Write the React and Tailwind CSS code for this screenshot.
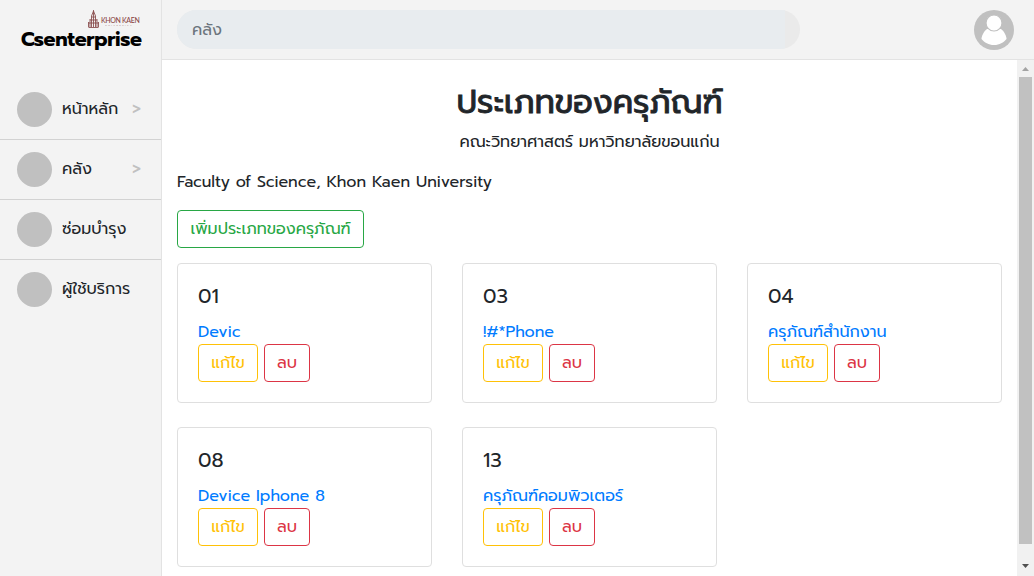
import React from "react";

const menu = [
  { label: "หน้าหลัก", arrow: true },
  { label: "คลัง", arrow: true },
  { label: "ซ่อมบำรุง" },
  { label: "ผู้ใช้บริการ" },
];

const cards = [
  { id: "01", name: "Devic" },
  { id: "03", name: "!#*Phone" },
  { id: "04", name: "ครุภัณฑ์สำนักงาน" },
  { id: "08", name: "Device Iphone 8" },
  { id: "13", name: "ครุภัณฑ์คอมพิวเตอร์" },
];

function Logo() {
  return (
    <div className="flex h-20 flex-col pt-[9px] pl-[21px]">
      <div className="flex h-5 items-start gap-[2px] pl-[67px]">
        <svg width="11" height="20" viewBox="0 0 11 20" fill="none" stroke="#8b5050" strokeWidth="0.9">
          <path d="M5.500 1v17M5.500 2 3.500 7v11M5.500 2l2 5v11M2 10v8M9 10v8M.5 13v5M10.500 13v5M.5 18.500h10M3.500 8h4M2 11h7M.5 14h10" />
        </svg>
        <div className="flex flex-col pt-[8px] text-[#8b4545]">
          <span className="h-[7px] font-['Lato'] text-[7px] leading-[7px] font-medium tracking-[-0.35px] whitespace-nowrap">KHON KAEN</span>
          <span className="h-[3px] pl-1 text-[2.500px] leading-[3px] tracking-[1.400px] opacity-60">UNIVERSITY</span>
        </div>
      </div>
      <span className="font-['Prompt'] text-[20px] leading-[20px] font-bold tracking-[-0.35px] text-black">Csenterprise</span>
    </div>
  );
}

function Sidebar() {
  return (
    <aside className="h-full w-[162px] shrink-0 border-r border-[#e3e3e3] bg-[#f3f3f3]">
      <Logo />
      <nav>
        {menu.map((item) => (
          <div key={item.label} className="flex h-[60px] items-center border-b border-[#d2d2d2] pr-5 pl-[17px] last:border-transparent">
            <span className="size-[35px] shrink-0 rounded-full bg-[#c0c0c0]" />
            <span className="mb-[2px] ml-[10px] whitespace-nowrap text-[#212529]">{item.label}</span>
            {item.arrow && <span className="mb-[2px] ml-auto font-medium text-[#c0c0c0]">&gt;</span>}
          </div>
        ))}
      </nav>
    </aside>
  );
}

function Header() {
  return (
    <header className="flex h-[60px] shrink-0 items-center justify-between border-b border-[#e3e3e3] bg-[#f3f3f3] pr-5 pl-[15px]">
      <div className="h-[39px] w-[623px] overflow-hidden rounded-full bg-[#eaeaea] pr-[15px]">
        <div className="flex h-full items-center bg-[#e8ecef] pl-[15px] text-[#6c757d]">คลัง</div>
      </div>
      <svg width="40" height="40" viewBox="0 0 40 40">
        <circle cx="20" cy="20" r="20" fill="#c0c0c0" />
        <path d="M13 19C9 22 7.500 27 7.500 29c3 3.500 7 6 12.500 6s9.500-2.500 12.500-6c0-2-1.500-7-5.500-10z" fill="#fff" />
        <circle cx="20" cy="13" r="8" fill="#fff" stroke="#c0c0c0" strokeWidth="1.200" />
      </svg>
    </header>
  );
}

function Card({ id, name }) {
  return (
    <article className="h-[140px] rounded border border-[#dfdfdf] p-5">
      <h5 className="mb-3 text-xl leading-6 font-normal text-[#212529]">{id}</h5>
      <div className="h-6 whitespace-nowrap text-[#007bff]">{name}</div>
      <div className="flex gap-[6px]">
        <button className="flex h-[38px] w-[60px] items-center justify-center rounded border border-[#ffc107] text-[#ffc107]">แก้ไข</button>
        <button className="flex h-[38px] w-[46px] items-center justify-center rounded border border-[#dc3545] text-[#dc3545]">ลบ</button>
      </div>
    </article>
  );
}

function Scrollbar() {
  return (
    <div className="flex w-[17px] shrink-0 flex-col items-center bg-[#f1f1f1]">
      <svg width="17" height="17" viewBox="0 0 17 17"><path d="M5 11h7L8.500 7z" fill="#a3a3a3" /></svg>
      <div className="h-[467px] w-[13px] bg-[#c1c1c1]" />
      <svg className="mt-auto" width="17" height="17" viewBox="0 0 17 17"><path d="M5 5h7L8.500 9z" fill="#505050" /></svg>
    </div>
  );
}

export default function App() {
  return (
    <div className="flex h-[576px] w-[1034px] overflow-hidden bg-white font-['Prompt','Noto_Sans_Thai','Noto_Sans',sans-serif] text-base leading-6 font-normal text-[#212529]">
      <Sidebar />
      <div className="flex min-w-0 flex-1 flex-col">
        <Header />
        <div className="flex min-h-0 flex-1">
          <main className="min-w-0 flex-1 overflow-hidden px-[15px] pt-6">
            <h1 className="mb-2 text-center text-[32px] leading-[38px] font-normal [-webkit-text-stroke:0.9px_#212529]">ประเภทของครุภัณฑ์</h1>
            <p className="mb-4 text-center">คณะวิทยาศาสตร์ มหาวิทยาลัยขอนแก่น</p>
            <p className="mb-4">Faculty of Science, Khon Kaen University</p>
            <button className="mb-[15px] flex h-[38px] w-[187px] items-center justify-center rounded border border-[#28a745] whitespace-nowrap text-[#28a745]">เพิ่มประเภทของครุภัณฑ์</button>
            <div className="grid grid-cols-[255px_255px_255px] gap-x-[30px] gap-y-6">
              {cards.map((c) => <Card key={c.id} {...c} />)}
            </div>
          </main>
          <Scrollbar />
        </div>
      </div>
    </div>
  );
}
